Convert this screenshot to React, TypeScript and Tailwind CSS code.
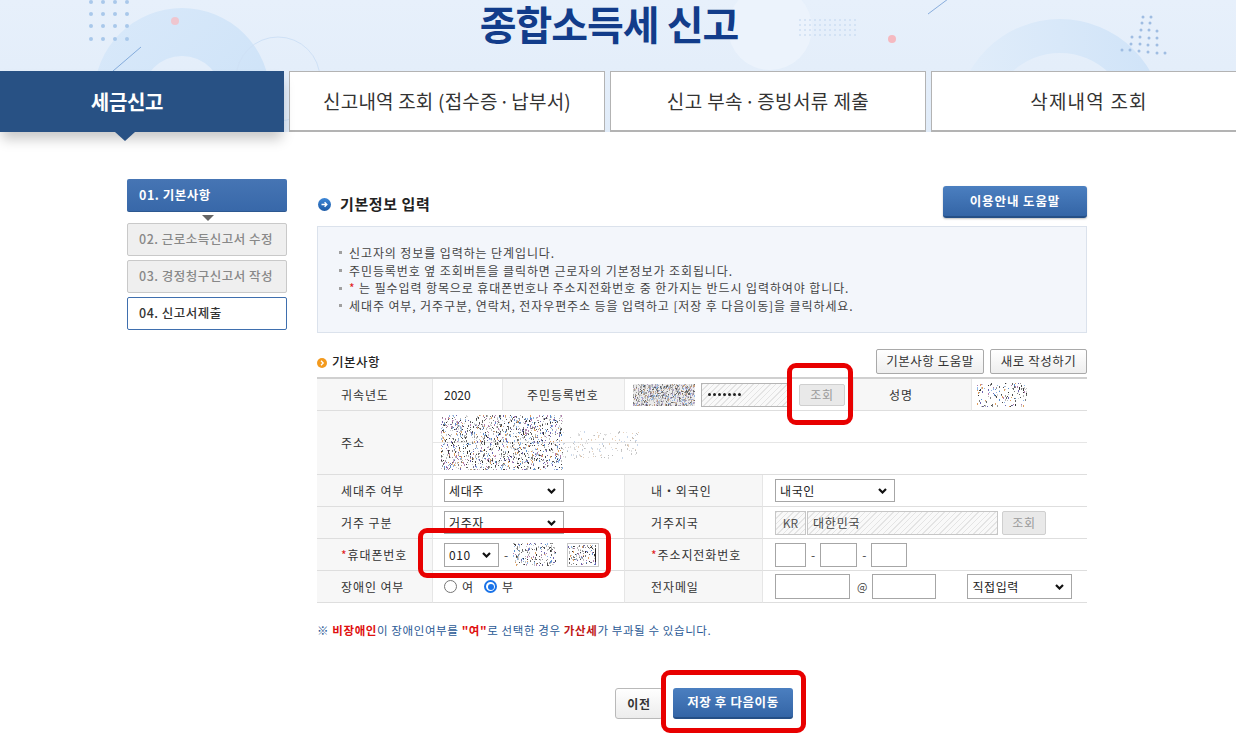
import React from "react";

function mulberry32(a: number) {
  return function () {
    a |= 0;
    a = (a + 0x6d2b79f5) | 0;
    let t = Math.imul(a ^ (a >>> 15), 1 | a);
    t = (t + Math.imul(t ^ (t >>> 7), 61 | t)) ^ t;
    return ((t ^ (t >>> 14)) >>> 0) / 4294967296;
  };
}

const DARK = ["#333333", "#4a4a4a", "#666666", "#808080", "#9a9a9a", "#5b8fd0", "#8fb6e6", "#e0a060", "#b47fb0", "#6f66b0", "#c4c4c4", "#d4d4d4", "#b8b8b8"];
const MID = ["#777777", "#999999", "#aaaaaa", "#bbbbbb", "#c8c8c8", "#d2d2d2", "#8fb6e6", "#c8a080", "#b0a0c8", "#666666"];
const LIGHT = ["#c8c8c8", "#d6d6d6", "#e0e0e0", "#bcbcbc", "#c9d8ec", "#e8d2bc"];

function Noise({ w, h, density, seed, pal = DARK, bg }: { w: number; h: number; density: number; seed: number; pal?: string[]; bg?: string }) {
  const r = mulberry32(seed);
  const n = Math.floor(w * h * density);
  const rects = [];
  for (let i = 0; i < n; i++) {
    const x = Math.floor(r() * w);
    const y = Math.floor(r() * h);
    const c = pal[Math.floor(r() * pal.length)];
    const tall = r() > 0.6;
    rects.push(<rect key={i} x={x} y={y} width={1} height={tall ? 2 : 1} fill={c} />);
  }
  return (
    <svg width={w} height={h} className="block shrink-0" style={bg ? { background: bg } : undefined}>
      {rects}
    </svg>
  );
}

function Chevron() {
  return (
    <svg width="9" height="6" viewBox="0 0 9 6" className="absolute right-[7px] top-1/2 -translate-y-1/2 pointer-events-none">
      <polyline points="1,1 4.5,4.5 8,1" fill="none" stroke="#111" strokeWidth="2.2" />
    </svg>
  );
}

function Sel({ w, value, h = 23 }: { w: number; value: string; h?: number }) {
  return (
    <div className="relative shrink-0 bg-white border border-[#a6a6a6]" style={{ width: w, height: h }}>
      <div className="h-full flex items-center pl-[4px] text-[12px] text-[#222] tracking-[0.6px]">{value}</div>
      <Chevron />
    </div>
  );
}

function Box({ w, h = 24 }: { w: number; h?: number }) {
  return <div className="shrink-0 bg-white border border-[#a6a6a6]" style={{ width: w, height: h }} />;
}

function HeaderDeco() {
  const leftDots = [];
  for (const x of [91, 103, 115, 127]) for (const y of [2, 14, 26, 39]) leftDots.push(<circle key={`l${x}-${y}`} cx={x} cy={y} r={2} fill="#a9c8ea" />);
  const rightPts: [number, number][] = [
    [1143, 17], [1151, 17],
    [1142, 23], [1150, 23],
    [1141, 30], [1149, 30], [1157, 31],
    [1132, 37], [1140, 37], [1149, 38], [1157, 38],
    [1131, 44], [1140, 44], [1148, 45], [1157, 45],
    [1122, 50], [1130, 50], [1139, 51], [1148, 52], [1157, 53], [1165, 53],
  ];
  const fine = [];
  for (let x = 800; x <= 856; x += 5) for (let y = 20; y <= 35; y += 5) fine.push(<circle key={`f${x}-${y}`} cx={x} cy={y} r={0.8} fill="#bcd2ec" />);
  return (
    <svg width="1236" height="132" className="absolute inset-0" viewBox="0 0 1236 132">
      <defs>
        <linearGradient id="ringL" x1="0" y1="0" x2="1" y2="1">
          <stop offset="0" stopColor="#d9e9fa" />
          <stop offset="1" stopColor="#cbe1f7" />
        </linearGradient>
        <linearGradient id="ringR" x1="0" y1="0" x2="1" y2="0">
          <stop offset="0" stopColor="#e1edfa" />
          <stop offset="1" stopColor="#cfe3f8" />
        </linearGradient>
      </defs>
      <circle cx="770" cy="28" r="42" fill="#ecf3fc" />
      <path d="M 94 96 a 88 88 0 1 0 176 0 a 88 88 0 1 0 -176 0 Z M 142 96 a 40 40 0 1 1 80 0 a 40 40 0 1 1 -80 0 Z" fill="url(#ringL)" fillRule="evenodd" />
      <circle cx="278" cy="79" r="42" fill="none" stroke="#cfe1f6" strokeWidth="1" />
      {leftDots}
      <circle cx="175" cy="21" r="4" fill="#efc6cf" />
      <line x1="113" y1="71" x2="141" y2="47" stroke="#6f9cd3" strokeWidth="0.8" />
      <path d="M 956 123 a 104 104 0 1 0 208 0 a 104 104 0 1 0 -208 0 Z M 990 123 a 70 70 0 1 1 140 0 a 70 70 0 1 1 -140 0 Z" fill="url(#ringR)" fillRule="evenodd" />
      {rightPts.map(([x, y], i) => (
        <circle key={`r${i}`} cx={x} cy={y} r={1.5} fill="#9fbde2" />
      ))}
      {fine}
      <circle cx="892" cy="39" r="4" fill="#f5b9c0" />
      <line x1="928" y1="14" x2="948" y2="-1" stroke="#6f9cd3" strokeWidth="0.8" />
    </svg>
  );
}

const hatch = "bg-[repeating-linear-gradient(135deg,#e4e4e4_0px,#e4e4e4_1px,#f9f9f9_1px,#f9f9f9_4px)]";

export default function App() {
  const label = "bg-[#f7f7f7] flex items-center text-[12px] text-[#333] tracking-[0.9px] border-b border-[#dedede]";
  const val = "flex items-center border-b border-[#dedede] border-l border-l-[#e6e6e6] bg-white";
  return (
    <div className="relative w-[1236px] h-[742px] overflow-hidden bg-white font-['Noto_Sans_CJK_KR','Noto_Sans',sans-serif] text-[#333]">
      {/* Header */}
      <header className="relative h-[132px]">
        <div className="absolute inset-0 overflow-hidden bg-[linear-gradient(180deg,#e7f0fb,#e1ecf9)]">
          <HeaderDeco />
        </div>
        <div className="relative h-[71px] flex items-start justify-center pt-[1px]">
          <h1 className="text-[40px] font-bold text-[#123c8a] leading-[44px] tracking-[-1px] mr-[18px]">종합소득세 신고</h1>
        </div>
        <nav className="relative flex gap-[5px] h-[61px]">
          <div className="relative w-[284px] shrink-0 bg-[#285184] flex items-center justify-center pr-[30px] text-white font-bold text-[20px] tracking-[-0.3px] shadow-[0_9px_12px_-2px_rgba(0,0,0,0.22)]">
            세금신고
            <span className="absolute left-[115px] top-full w-0 h-0 border-l-[10px] border-r-[10px] border-t-[9px] border-l-transparent border-r-transparent border-t-[#285184]" />
          </div>
          <div className="w-[316px] shrink-0 bg-white border border-[#b3b3b3] border-b-2 flex items-center justify-center text-[19px] text-[#333] tracking-[0.2px]">신고내역 조회 (접수증&#8202;·&#8202;납부서)</div>
          <div className="w-[316px] shrink-0 bg-white border border-[#b3b3b3] border-b-2 flex items-center justify-center text-[19px] text-[#333] tracking-[0.4px]">신고 부속&#8202;·&#8202;증빙서류 제출</div>
          <div className="w-[316px] shrink-0 bg-white border border-[#b3b3b3] border-b-2 flex items-center justify-center text-[19px] text-[#333] tracking-[1.2px]">삭제내역 조회</div>
        </nav>
      </header>

      {/* Body */}
      <div className="flex pl-[127px] pt-[47px]">
        <aside className="w-[160px] shrink-0 flex flex-col">
          <div className="h-[33px] bg-[linear-gradient(180deg,#4675b4,#3868a9)] border-b border-[#2d5890] rounded-[2px] flex items-center pl-[12px] text-white font-bold text-[12.5px] tracking-[0.5px]">01. 기본사항</div>
          <div className="h-[11px] flex justify-center pt-[3px] pl-[2px]">
            <span className="w-0 h-0 border-l-[6px] border-r-[6px] border-t-[6px] border-l-transparent border-r-transparent border-t-[#666]" />
          </div>
          <div className="h-[33px] bg-[#efefef] border border-[#c9c9c9] rounded-[2px] flex items-center pl-[11px] text-[#888] font-medium text-[12.5px] tracking-[0.5px]">02. 근로소득신고서 수정</div>
          <div className="h-[33px] mt-[4px] bg-[#efefef] border border-[#c9c9c9] rounded-[2px] flex items-center pl-[11px] text-[#888] font-medium text-[12.5px] tracking-[0.5px]">03. 경정청구신고서 작성</div>
          <div className="h-[33px] mt-[4px] bg-white border border-[#3f6fae] rounded-[2px] flex items-center pl-[11px] text-[#333] font-medium text-[12.5px] tracking-[0.5px]">04. 신고서제출</div>
        </aside>

        <main className="ml-[30px] w-[770px] shrink-0 pt-[7px]">
          <div className="h-[32px] flex items-center justify-between">
            <div className="flex items-center gap-[9px] pl-[1px] pt-[4px]">
              <svg width="13" height="13" viewBox="0 0 13 13">
                <defs>
                  <linearGradient id="ib" x1="0" y1="0" x2="0" y2="1">
                    <stop offset="0" stopColor="#3d86d6" />
                    <stop offset="1" stopColor="#1c5aa6" />
                  </linearGradient>
                </defs>
                <circle cx="6.5" cy="6.5" r="6.5" fill="url(#ib)" />
                <path d="M3.5 6.5 H8.8 M6.6 4.3 L8.8 6.5 L6.6 8.7" fill="none" stroke="#fff" strokeWidth="1.4" />
              </svg>
              <span className="text-[15px] font-bold text-[#222] tracking-[0.6px]">기본정보 입력</span>
            </div>
            <div className="w-[144px] h-[32px] rounded-[3px] bg-[linear-gradient(180deg,#4b7fc0,#3465a6)] border-b-2 border-[#254f86] flex items-center justify-center text-white font-bold text-[12.5px] tracking-[0.9px] shadow-[0_1px_2px_rgba(0,0,0,0.25)]">이용안내 도움말</div>
          </div>

          <div className="mt-[8px] h-[107px] bg-[#f3f6fb] border border-[#dbe2ec] pt-[17px] pl-[21px] text-[12px] text-[#444] leading-[17.7px] tracking-[0.9px]">
            {[
              <>신고자의 정보를 입력하는 단계입니다.</>,
              <>주민등록번호 옆 조회버튼을 클릭하면 근로자의 기본정보가 조회됩니다.</>,
              <><span className="text-[#e02020]">*</span> 는 필수입력 항목으로 휴대폰번호나 주소지전화번호 중 한가지는 반드시 입력하여야 합니다.</>,
              <>세대주 여부, 거주구분, 연락처, 전자우편주소 등을 입력하고 [저장 후 다음이동]을 클릭하세요.</>,
            ].map((t, i) => (
              <div key={i} className="flex items-center">
                <span className="inline-block w-[3px] h-[3px] bg-[#a0a0a0] mr-[7px]" />
                <span>{t}</span>
              </div>
            ))}
          </div>

          <div className="mt-[16px] h-[25px] flex items-center justify-between">
            <div className="flex items-center gap-[5px] pt-[2px]">
              <svg width="10" height="10" viewBox="0 0 10 10">
                <circle cx="5" cy="5" r="5" fill="#f39a1e" />
                <path d="M4 2.8 L6.2 5 L4 7.2" fill="none" stroke="#fff" strokeWidth="1.3" />
              </svg>
              <span className="text-[12.5px] text-[#222] font-medium tracking-[0.5px]">기본사항</span>
            </div>
            <div className="flex gap-[6px]">
              <div className="w-[108px] h-[25px] border border-[#a9a9a9] rounded-[2px] bg-[linear-gradient(180deg,#ffffff,#eeeeee)] flex items-center justify-center text-[12.5px] text-[#333] tracking-[0.5px]">기본사항 도움말</div>
              <div className="w-[97px] h-[25px] border border-[#a9a9a9] rounded-[2px] bg-[linear-gradient(180deg,#ffffff,#eeeeee)] flex items-center justify-center text-[12.5px] text-[#333] tracking-[0.5px]">새로 작성하기</div>
            </div>
          </div>

          {/* Table */}
          <div className="mt-[3px] border-t-2 border-[#d0d0d0] grid grid-cols-[115px_70px_122px_138px_91px_118px_116px]">
            {/* row 1 */}
            <div className={`${label} h-[32px] pl-[24px]`}>귀속년도</div>
            <div className={`${val} pl-[11px] text-[12px] text-[#222]`}>2020</div>
            <div className={`${label} pl-[24px] border-l border-l-[#e6e6e6]`}>주민등록번호</div>
            <div className={`${val} col-span-2 pl-[8px] gap-[6px]`}>
              <Noise w={62} h={22} density={0.6} seed={11} pal={MID} bg="#ececec" />
              <div className={`w-[87px] h-[24px] border border-[#b5b5b5] ${hatch} flex items-center gap-[2px] pl-[6px]`}>
                {[0, 1, 2, 3, 4, 5, 6].map((i) => (
                  <span key={i} className="w-[3px] h-[3px] rounded-full bg-[#222]" />
                ))}
              </div>
              <div className="ml-[5px] w-[46px] h-[22px] border border-[#cfcfcf] bg-[#e9e9e9] rounded-[2px] flex items-center justify-center text-[12px] text-[#9a9a9a] tracking-[0.6px]">조회</div>
            </div>
            <div className={`${label} pl-[35px] border-l border-l-[#e6e6e6]`}>성명</div>
            <div className={`${val} pl-[5px]`}>
              <Noise w={50} h={24} density={0.12} seed={23} />
            </div>

            {/* row 2 */}
            <div className={`${label} h-[64px] pl-[24px]`}>주소</div>
            <div className={`${val} col-span-6 relative !items-stretch flex-col`}>
              <div className="h-[32px] border-b border-[#e6e6e6]" />
              <div className="h-[31px]" />
              <div className="absolute left-[8px] top-[4px] flex items-start">
                <Noise w={122} h={55} density={0.2} seed={37} />
                <div className="mt-[16px]">
                  <Noise w={76} h={28} density={0.07} seed={41} pal={LIGHT} />
                </div>
              </div>
            </div>

            {/* row 3 */}
            <div className={`${label} h-[32px] pl-[24px]`}>세대주 여부</div>
            <div className={`${val} col-span-2 pl-[11px]`}>
              <Sel w={120} value="세대주" />
            </div>
            <div className={`${label} pl-[26px] border-l border-l-[#e6e6e6]`}>내・외국인</div>
            <div className={`${val} col-span-3 pl-[12px]`}>
              <Sel w={120} value="내국인" />
            </div>

            {/* row 4 */}
            <div className={`${label} h-[32px] pl-[24px]`}>거주 구분</div>
            <div className={`${val} col-span-2 pl-[11px]`}>
              <Sel w={120} value="거주자" />
            </div>
            <div className={`${label} pl-[26px] border-l border-l-[#e6e6e6]`}>거주지국</div>
            <div className={`${val} col-span-3 pl-[12px]`}>
              <div className={`w-[31px] h-[24px] border border-[#c6c6c6] ${hatch} flex items-center justify-center text-[12px] text-[#555]`}>KR</div>
              <div className={`ml-[1px] w-[191px] h-[24px] border border-[#c6c6c6] ${hatch} flex items-center pl-[5px] text-[12px] text-[#444] tracking-[0.8px]`}>대한민국</div>
              <div className="ml-[4px] w-[44px] h-[24px] border border-[#cfcfcf] bg-[#e9e9e9] rounded-[2px] flex items-center justify-center text-[12px] text-[#9a9a9a] tracking-[0.6px]">조회</div>
            </div>

            {/* row 5 */}
            <div className={`${label} h-[32px] pl-[24px]`}>
              <span className="text-[#e02020]">*</span>휴대폰번호
            </div>
            <div className={`${val} col-span-2 pl-[11px]`}>
              <Sel w={55} value="010" h={24} />
              <span className="mx-[5px] text-[12px] text-[#444]">-</span>
              <Noise w={43} h={23} density={0.2} seed={53} />
              <div className="ml-[11px] relative w-[32px] h-[24px] border border-[#c9c9c9] bg-white flex items-center">
                <Noise w={28} h={20} density={0.2} seed={59} />
                <span className="absolute right-[2px] top-[5px] w-[1px] h-[13px] bg-[#222]" />
              </div>
            </div>
            <div className={`${label} pl-[26px] border-l border-l-[#e6e6e6]`}>
              <span className="text-[#e02020]">*</span>주소지전화번호
            </div>
            <div className={`${val} col-span-3 pl-[12px]`}>
              <Box w={31} />
              <span className="mx-[5px] text-[12px] text-[#444]">-</span>
              <Box w={37} />
              <span className="mx-[5px] text-[12px] text-[#444]">-</span>
              <Box w={36} />
            </div>

            {/* row 6 */}
            <div className={`${label} h-[32px] pl-[24px]`}>장애인 여부</div>
            <div className={`${val} col-span-2 pl-[11px] text-[12px] text-[#333]`}>
              <span className="w-[13px] h-[13px] rounded-full border border-[#767676] bg-white" />
              <span className="ml-[5px]">여</span>
              <span className="ml-[11px] w-[13px] h-[13px] rounded-full border-[2px] border-[#1a73e8] bg-white flex items-center justify-center">
                <span className="w-[6px] h-[6px] rounded-full bg-[#1a73e8]" />
              </span>
              <span className="ml-[5px]">부</span>
            </div>
            <div className={`${label} pl-[26px] border-l border-l-[#e6e6e6]`}>전자메일</div>
            <div className={`${val} col-span-3 pl-[12px]`}>
              <Box w={75} h={25} />
              <span className="ml-[7px] mr-[5px] text-[11px] text-[#444]">@</span>
              <Box w={64} h={25} />
              <div className="ml-[31px]">
                <Sel w={105} value="직접입력" h={25} />
              </div>
            </div>
          </div>

          <div className="mt-[20px] text-[11.5px] leading-[14px] text-[#2b5a96] tracking-[0.6px]">
            ※ <span className="text-[#e01010] font-bold">비장애인</span>이 장애인여부를 <span className="text-[#e01010] font-bold">"여"</span>로 선택한 경우 <span className="text-[#c01818] font-bold">가산세</span>가 부과될 수 있습니다.
          </div>

          <div className="mt-[51px] flex justify-center gap-[10px] pl-[4px]">
            <div className="w-[48px] h-[31px] border border-[#b9b9b9] rounded-[3px] bg-[linear-gradient(180deg,#ffffff,#ececec)] flex items-center justify-center text-[12px] font-bold text-[#333] tracking-[0.6px]">이전</div>
            <div className="w-[120px] h-[31px] rounded-[3px] bg-[linear-gradient(180deg,#4b7fc0,#3465a6)] border-b-2 border-[#254f86] flex items-center justify-center text-white font-bold text-[12.5px] tracking-[0.6px]">저장 후 다음이동</div>
          </div>
        </main>
      </div>

      {/* annotation highlights */}
      <div className="absolute left-[787px] top-[363px] w-[66px] h-[62px] border-[5px] border-[#e80000] rounded-[9px]" />
      <div className="absolute left-[418px] top-[528px] w-[193px] h-[50px] border-[5px] border-[#e80000] rounded-[9px]" />
      <div className="absolute left-[661px] top-[670px] w-[145px] h-[63px] border-[5px] border-[#e80000] rounded-[9px]" />
    </div>
  );
}
